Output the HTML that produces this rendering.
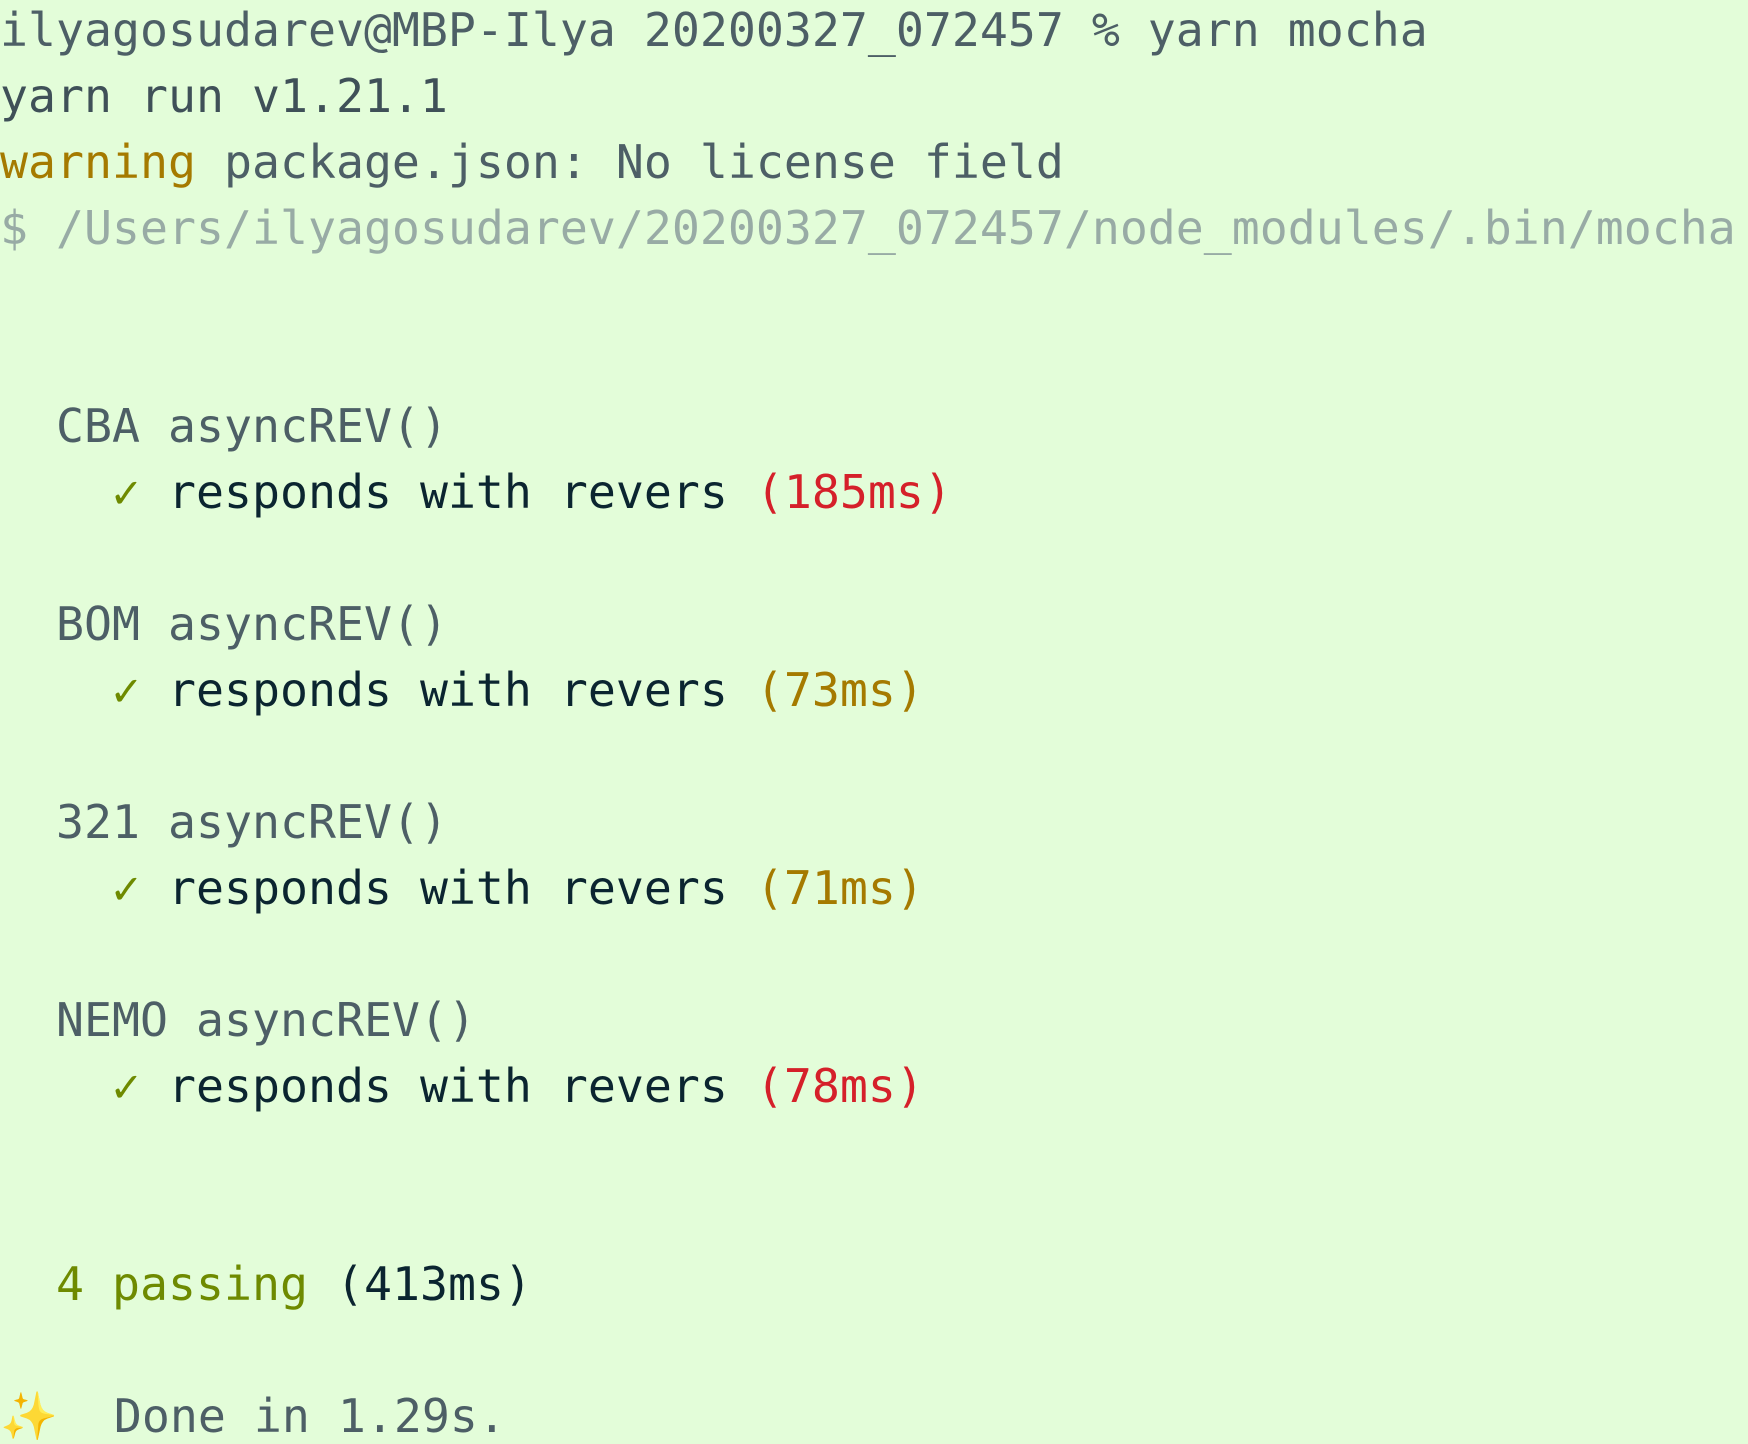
<!DOCTYPE html>
<html><head><meta charset="utf-8"><style>
html,body{margin:0;padding:0;background:#e3fdd9;width:1748px;height:1444px;overflow:hidden}
pre{margin:-3px 0 0 0;font-family:"DejaVu Sans Mono","Liberation Mono",monospace;font-size:46.5px;line-height:66px;color:#4d5f66;white-space:pre}
.d{color:#0b2530}.y{color:#a57a00}.r{color:#d5202a}.g{color:#6e8a00}.p{color:#98aba5}.b{color:#3f5058}
</style></head><body><pre>ilyagosudarev@MBP-Ilya 20200327_072457 % yarn mocha
<span class="b">yarn run v1.21.1</span>
<span class="y">warning</span> package.json: No license field
<span class="p">$ /Users/ilyagosudarev/20200327_072457/node_modules/.bin/mocha</span>


  CBA asyncREV()
    <span class="g">✓</span> <span class="d">responds with revers</span> <span class="r">(185ms)</span>

  BOM asyncREV()
    <span class="g">✓</span> <span class="d">responds with revers</span> <span class="y">(73ms)</span>

  321 asyncREV()
    <span class="g">✓</span> <span class="d">responds with revers</span> <span class="y">(71ms)</span>

  NEMO asyncREV()
    <span class="g">✓</span> <span class="d">responds with revers</span> <span class="r">(78ms)</span>


  <span class="g">4 passing</span> <span class="d">(413ms)</span>

<span style="color:#f5c431">✨</span>  Done in 1.29s.
</pre></body></html>
